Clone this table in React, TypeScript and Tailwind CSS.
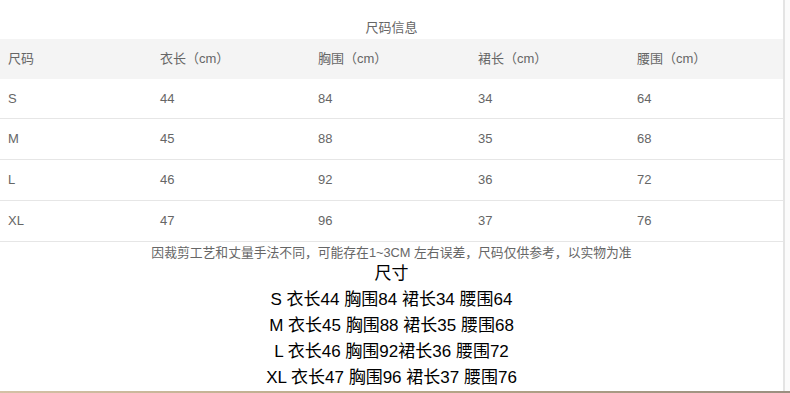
const font = { fontFamily: '"Liberation Sans", "Noto Sans CJK SC", sans-serif' }

const headers = ['尺码', '衣长（cm）', '胸围（cm）', '裙长（cm）', '腰围（cm）']

const rows = [
  ['S', '44', '84', '34', '64'],
  ['M', '45', '88', '35', '68'],
  ['L', '46', '92', '36', '72'],
  ['XL', '47', '96', '37', '76'],
]

const summary = [
  'S 衣长44 胸围84 裙长34 腰围64',
  'M 衣长45 胸围88 裙长35 腰围68',
  'L 衣长46 胸围92裙长36 腰围72',
  'XL 衣长47 胸围96 裙长37 腰围76',
]

const cols = 'grid grid-cols-[152px_158px_160px_159px_156px]'

export default function App() {
  return (
    <div className="w-[790px] h-[393px] bg-white overflow-hidden flex flex-col" style={font}>
      <div className="flex flex-1">
        <div className="w-[785px] border-r-2 border-[#e4e4e4] flex flex-col">
          <div className="h-[39px] pt-[19px] text-center text-[13px] leading-[18px] text-[#666]">尺码信息</div>
          <div className={`${cols} h-[40px] bg-[#f4f4f4] items-center text-[13px] text-[#666]`}>
            {headers.map(h => (
              <div key={h} className="pl-2">{h}</div>
            ))}
          </div>
          {rows.map((r, n) => (
            <div key={r[0]} className={`${cols} ${n === 0 ? 'h-[40px]' : 'h-[41px]'} items-center border-b border-[#e6e6e6] text-[13px] text-[#666]`}>
              {r.map((c, i) => (
                <div key={i} className="pl-2">{c}</div>
              ))}
            </div>
          ))}
          <div className="text-center text-[12.8px] leading-[17px] text-[#666] mt-[2px]">
            因裁剪工艺和丈量手法不同，可能存在1~3CM 左右误差，尺码仅供参考，以实物为准
          </div>
          <div className="text-center text-[17px] leading-[26px] text-black">尺寸</div>
          {summary.map(s => (
            <div key={s} className="text-center text-[17px] leading-[26px] text-black">{s}</div>
          ))}
        </div>
        <div className="flex-1 bg-[#fbfbfb]" />
      </div>
      <div className="h-[2px] bg-gradient-to-r from-[#d4c1a6] via-[#b8a888] to-[#9a8f80]" />
    </div>
  )
}
